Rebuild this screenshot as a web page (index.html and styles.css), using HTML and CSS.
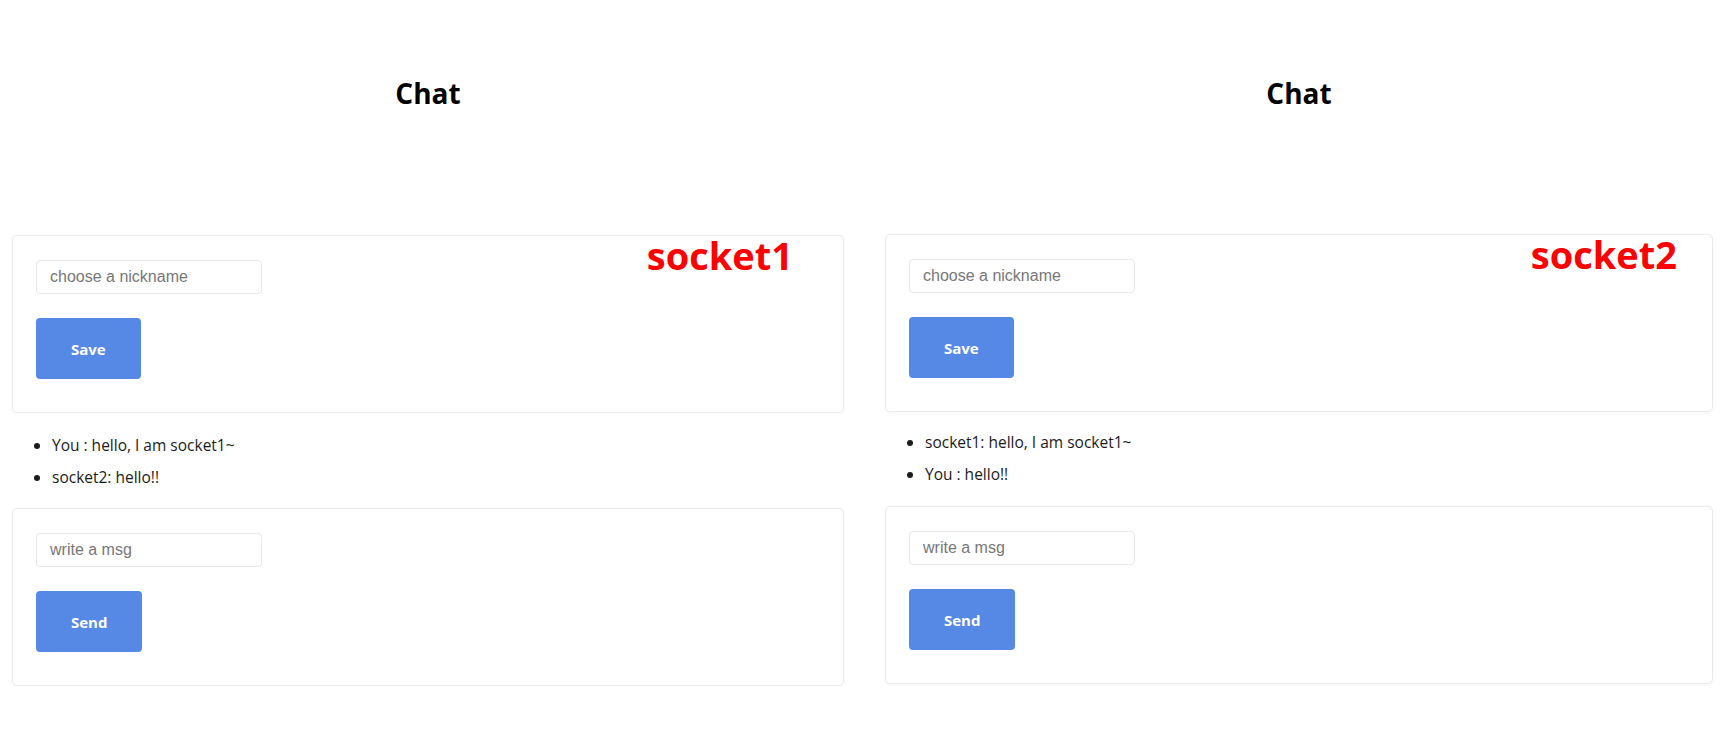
FILE: index.html
```html
<!DOCTYPE html>
<html lang="en">
<head>
    <meta charset="UTF-8">
    <meta name="viewport" content="width=device-width, initial-scale=1.0">
    <title>Chat</title>
    <link rel="stylesheet" href="styles.css">
</head>
<body>
    <div class="screens">
        <section class="screen">
            <h1 class="title">Chat</h1>
            <form class="box">
                <span class="tag tag-left">socket1</span>
                <input type="text" placeholder="choose a nickname">
                <button type="button" class="btn">Save</button>
            </form>
            <ul class="messages">
                <li>You : hello, I am socket1~</li>
                <li>socket2: hello!!</li>
            </ul>
            <form class="box">
                <input type="text" placeholder="write a msg">
                <button type="button" class="btn">Send</button>
            </form>
        </section>

        <section class="screen screen-right">
            <h1 class="title">Chat</h1>
            <form class="box">
                <span class="tag tag-right">socket2</span>
                <input type="text" placeholder="choose a nickname">
                <button type="button" class="btn">Save</button>
            </form>
            <ul class="messages">
                <li>socket1: hello, I am socket1~</li>
                <li>You : hello!!</li>
            </ul>
            <form class="box">
                <input type="text" placeholder="write a msg">
                <button type="button" class="btn">Send</button>
            </form>
        </section>
    </div>
</body>
</html>
```

FILE: styles.css
```css
body {
    margin: 0;
    padding: 0;
    background-color: #fff;
    font-family: "Open Sans", "Noto Sans", sans-serif;
    color: #1b1b1b;
}

.screens {
    display: grid;
    grid-template-columns: 832px 828px;
    column-gap: 41px;
    padding: 0 11px 0 12px;
}

.title {
    margin: 0 0 124px;
    padding-top: 75px;
    font-size: 28px;
    line-height: 36px;
    font-weight: 700;
    text-align: center;
    color: #000;
}

.screen-right .title {
    margin-bottom: 123px;
}

.box {
    position: relative;
    display: flex;
    flex-direction: column;
    align-items: flex-start;
    gap: 24px;
    padding: 24px 23px 33px;
    background-color: #fff;
    border: 1px solid #ebebeb;
    border-radius: 5px;
    box-shadow: 0 1px 4px rgba(0, 0, 0, 0.04);
}

.box input {
    box-sizing: border-box;
    width: 226px;
    height: 34px;
    padding: 0 13px;
    font-family: "Liberation Sans", Arial, sans-serif;
    font-size: 16px;
    border: 1px solid #e8e8e8;
    border-radius: 4px;
    outline: none;
}

.box input::placeholder {
    color: #777;
}

.btn {
    height: 61px;
    padding: 0 35px;
    font-family: "Open Sans", "Noto Sans", sans-serif;
    font-size: 15px;
    font-weight: 700;
    color: #fff;
    background-color: #5689e5;
    border: none;
    border-radius: 4px;
    cursor: pointer;
}

.tag {
    position: absolute;
    top: -7px;
    font-size: 38px;
    font-weight: 700;
    line-height: 1.4;
    color: #f00;
}

.tag-left {
    right: 50px;
}

.tag-right {
    right: 35px;
}

.messages {
    margin: 16px 0 15px;
    padding-left: 40px;
    font-size: 15.5px;
}

.screen-right .messages {
    margin: 15px 0 16px;
}

.messages li {
    line-height: 32px;
}

.screen-right .messages li {
    line-height: 31.5px;
}
```
